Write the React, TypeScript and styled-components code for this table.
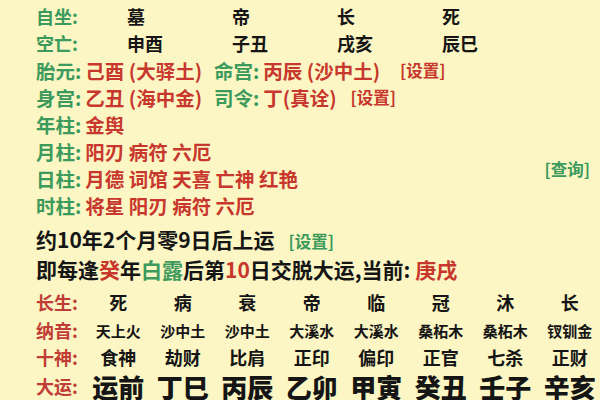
import React from "react";
import styled, { createGlobalStyle } from "styled-components";

const GREEN = "#3c9a5d";
const RED = "#c8372d";
const DARKRED = "#c03c36";
const INK = "#151515";

const Global = createGlobalStyle`
  html, body { margin: 0; padding: 0; background: #fbf6c3; }
  body { width: 600px; height: 400px; overflow: hidden; font-family: "Noto Sans CJK SC", "Noto Sans", sans-serif; }
`;

const Page = styled.div`
  width: 600px;
  height: 400px;
  overflow: hidden;
  background: #fbf6c3;
  padding: 3px 0 0 36px;
  box-sizing: border-box;
  font-weight: 700;
  color: ${INK};
`;

const Line = styled.div`
  height: 27px;
  line-height: 27px;
  font-size: 19.5px;
  white-space: nowrap;
  display: flex;
  align-items: center;
`;

const GridLine = styled.div`
  display: grid;
  grid-template-columns: 91px repeat(4, 105px);
  height: 27px;
  line-height: 27px;
  font-size: 18px;
  white-space: nowrap;
`;

const Label = styled.span`
  color: ${GREEN};
  margin-right: 4px;
`;

const Val = styled.span<{ $gap?: number }>`
  color: ${RED};
  margin-right: ${(p) => p.$gap ?? 12}px;
`;

const Cell = styled.span`
  color: ${INK};
`;

const Link = styled.span<{ $green?: boolean; $ml?: number }>`
  font-size: 16.5px;
  color: ${(p) => (p.$green ? GREEN : RED)};
  margin-left: ${(p) => p.$ml ?? 6}px;
`;

const ShenshaBlock = styled.div`
  display: flex;
  width: 554px;
`;

const ShenshaRows = styled.div`
  display: flex;
  flex-direction: column;
  flex: 1;
`;

const QueryCell = styled.div`
  align-self: center;
  margin-top: 7px;
  font-size: 16.5px;
  color: ${GREEN};
`;

const BigLine = styled.div<{ $mt?: number }>`
  height: 30px;
  line-height: 30px;
  font-size: 21px;
  margin-top: ${(p) => p.$mt ?? 0}px;
  white-space: nowrap;
  color: ${INK};
`;

const C = styled.span<{ $c: string }>`
  color: ${(p) => p.$c};
`;

const Table = styled.div`
  margin-top: 5px;
`;

const TRow = styled.div<{ $h: number; $fs: number; $weight?: number }>`
  display: grid;
  grid-template-columns: 50px repeat(8, 64.5px);
  align-items: center;
  height: ${(p) => p.$h}px;
  line-height: 1.2;
  font-size: ${(p) => p.$fs}px;
  font-weight: ${(p) => p.$weight ?? 700};
  white-space: nowrap;
`;

const TLabel = styled.span`
  font-size: 18px;
  font-weight: 700;
  color: ${DARKRED};
`;

const TCell = styled.span`
  text-align: center;
  color: ${INK};
`;

const rows: { label: string; h: number; fs: number; w?: number; items: string[] }[] = [
  { label: "长生:", h: 28, fs: 18, items: ["死", "病", "衰", "帝", "临", "冠", "沐", "长"] },
  { label: "纳音:", h: 27, fs: 15, items: ["天上火", "沙中土", "沙中土", "大溪水", "大溪水", "桑柘木", "桑柘木", "钗钏金"] },
  { label: "十神:", h: 27, fs: 18, items: ["食神", "劫财", "比肩", "正印", "偏印", "正官", "七杀", "正财"] },
  { label: "大运:", h: 30, fs: 26, w: 900, items: ["运前", "丁巳", "丙辰", "乙卯", "甲寅", "癸丑", "壬子", "辛亥"] },
];

export default function App() {
  return (
    <>
      <Global />
      <Page>
        <GridLine>
          <Label>自坐:</Label>
          <Cell>墓</Cell>
          <Cell>帝</Cell>
          <Cell>长</Cell>
          <Cell>死</Cell>
        </GridLine>
        <GridLine>
          <Label>空亡:</Label>
          <Cell>申酉</Cell>
          <Cell>子丑</Cell>
          <Cell>戌亥</Cell>
          <Cell>辰巳</Cell>
        </GridLine>
        <Line>
          <Label>胎元:</Label>
          <Val>己酉 (大驿土)</Val>
          <Label>命宫:</Label>
          <Val $gap={14}>丙辰 (沙中土)</Val>
          <Link>[设置]</Link>
        </Line>
        <Line>
          <Label>身宫:</Label>
          <Val>乙丑 (海中金)</Val>
          <Label>司令:</Label>
          <Val $gap={8}>丁(真诠)</Val>
          <Link>[设置]</Link>
        </Line>
        <ShenshaBlock>
          <ShenshaRows>
            <Line>
              <Label>年柱:</Label>
              <Val>金舆</Val>
            </Line>
            <Line>
              <Label>月柱:</Label>
              <Val>阳刃 病符 六厄</Val>
            </Line>
            <Line>
              <Label>日柱:</Label>
              <Val>月德 词馆 天喜 亡神 红艳</Val>
            </Line>
            <Line>
              <Label>时柱:</Label>
              <Val>将星 阳刃 病符 六厄</Val>
            </Line>
          </ShenshaRows>
          <QueryCell>[查询]</QueryCell>
        </ShenshaBlock>
        <BigLine $mt={5}>
          约10年2个月零9日后上运<Link $green $ml={14}>[设置]</Link>
        </BigLine>
        <BigLine>
          即每逢<C $c={RED}>癸</C>年<C $c={GREEN}>白露</C>后第<C $c={RED}>10</C>日交脱大运,当前: <C $c={RED}>庚戌</C>
        </BigLine>
        <Table>
          {rows.map((r) => (
            <TRow key={r.label} $h={r.h} $fs={r.fs} $weight={r.w}>
              <TLabel>{r.label}</TLabel>
              {r.items.map((it, i) => (
                <TCell key={i}>{it}</TCell>
              ))}
            </TRow>
          ))}
        </Table>
      </Page>
    </>
  );
}
